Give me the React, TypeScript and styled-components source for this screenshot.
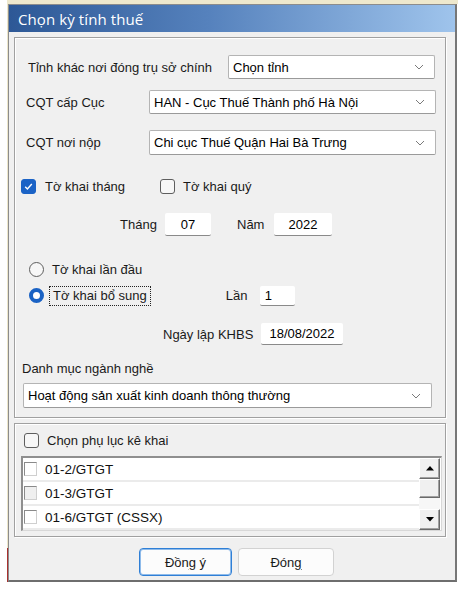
import styled, { createGlobalStyle } from "styled-components";

const GlobalStyle = createGlobalStyle`
  html, body {
    margin: 0;
    padding: 0;
    background: #fff;
  }
  body {
    font-family: "Liberation Sans", Arial, sans-serif;
    font-size: 13px;
    color: #000;
  }
`;

const Chevron = () => (
  <svg width="10" height="6" viewBox="0 0 10 6">
    <path d="M1 1 L5 5 L9 1" fill="none" stroke="#7a7a7a" strokeWidth="1" />
  </svg>
);

const Check = () => (
  <svg width="11" height="11" viewBox="0 0 11 11">
    <path d="M2.2 5.8 L4.4 8 L8.8 3" fill="none" stroke="#fff" strokeWidth="1.4" />
  </svg>
);

const Arrow = ({ down }: { down?: boolean }) => (
  <svg width="8" height="5" viewBox="0 0 8 5">
    <path d={down ? "M0 0 H8 L4 4.5 Z" : "M0 4.5 H8 L4 0 Z"} fill="#000" />
  </svg>
);

export default function App() {
  const rows = [
    { code: "01-2/GTGT", dim: false },
    { code: "01-3/GTGT", dim: true },
    { code: "01-6/GTGT (CSSX)", dim: false },
  ];

  return (
    <>
      <GlobalStyle />
      <Frame>
        <Window>
          <TitleBar>Chọn kỳ tính thuế</TitleBar>
          <Body>
            <Group $height={381}>
              <Row $top={17} $left={13}>
                <Label $width={200}>Tỉnh khác nơi đóng trụ sở chính</Label>
                <Select $width={207} $height={24}>
                  <span>Chọn tỉnh</span>
                  <Chevron />
                </Select>
              </Row>
              <Row $top={11} $left={11}>
                <Label $width={123}>CQT cấp Cục</Label>
                <Select $width={287} $height={24}>
                  <span>HAN - Cục Thuế Thành phố Hà Nội</span>
                  <Chevron />
                </Select>
              </Row>
              <Row $top={16} $left={11}>
                <Label $width={123}>CQT nơi nộp</Label>
                <Select $width={287} $height={25}>
                  <span>Chi cục Thuế Quận Hai Bà Trưng</span>
                  <Chevron />
                </Select>
              </Row>
              <Row $top={21} $left={6} $height={20}>
                <CheckBox $checked>
                  <Check />
                </CheckBox>
                <Label $width={124} $pad={9}>Tờ khai tháng</Label>
                <CheckBox />
                <Label $pad={8}>Tờ khai quý</Label>
              </Row>
              <Row $top={17} $left={105} $height={23}>
                <Label $width={45}>Tháng</Label>
                <TextBox $width={46}>07</TextBox>
                <Label $width={63} $pad={26}>Năm</Label>
                <TextBox $width={58}>2022</TextBox>
              </Row>
              <Row $top={23} $left={14} $height={20}>
                <Radio />
                <Label $pad={8}>Tờ khai lần đầu</Label>
              </Row>
              <Row $top={6} $left={14} $height={21}>
                <Radio $checked />
                <Focus>Tờ khai bổ sung</Focus>
                <Label $width={109} $pad={75}>Lần</Label>
                <TextBox $width={35} $height={20} $left>
                  1
                </TextBox>
              </Row>
              <Row $top={17} $left={148} $height={22}>
                <Label $width={98}>Ngày lập KHBS</Label>
                <TextBox $width={82} $height={22}>
                  18/08/2022
                </TextBox>
              </Row>
              <Row $top={15} $left={7} $height={16}>
                <Label>Danh mục ngành nghề</Label>
              </Row>
              <Row $top={7} $left={8}>
                <Select $width={409} $height={25}>
                  <span>Hoạt động sản xuất kinh doanh thông thường</span>
                  <Chevron />
                </Select>
              </Row>
            </Group>

            <Group $height={114} $gap={5}>
              <Row $top={8} $left={9} $height={16}>
                <CheckBox />
                <Label $pad={8}>Chọn phụ lục kê khai</Label>
              </Row>
              <ListBox>
                <ListRows>
                  {rows.map((r) => (
                    <ListRow key={r.code}>
                      <ItemBox $dim={r.dim} />
                      <span>{r.code}</span>
                    </ListRow>
                  ))}
                </ListRows>
                <ScrollBar>
                  <ScrollButton>
                    <Arrow />
                  </ScrollButton>
                  <Thumb />
                  <Track />
                  <ScrollButton>
                    <Arrow down />
                  </ScrollButton>
                </ScrollBar>
              </ListBox>
            </Group>

            <Buttons>
              <Button $primary>
                <span>
                  Đồn<u>g</u> ý
                </span>
              </Button>
              <Button>
                <span>
                  Đón<u>g</u>
                </span>
              </Button>
            </Buttons>
          </Body>
        </Window>
      </Frame>
    </>
  );
}

const Frame = styled.div`
  margin-left: 7px;
  width: 451px;
  padding: 4px 0 0 1px;
  background: linear-gradient(
    180deg,
    #ece5c9 0,
    #ece5c9 548px,
    #a8302e 548px,
    #a8302e 100%
  );
  background-size: 2px 100%;
  background-repeat: no-repeat;
  box-sizing: border-box;
  position: relative;

  &::before {
    content: "";
    position: absolute;
    left: 0;
    right: 0;
    top: 0;
    height: 4px;
    background: #eee8cd;
  }
`;

const Window = styled.div`
  width: 449px;
  height: 578px;
  box-sizing: border-box;
  border: 1px solid #8c8c8c;
  border-bottom: 2px solid #6e6e6e;
  border-right: 2px solid #777;
  background: #f0f0f0;
  display: flex;
  flex-direction: column;
`;

const TitleBar = styled.div`
  height: 27px;
  flex: none;
  display: flex;
  align-items: center;
  padding-left: 9px;
  padding-top: 1px;
  box-sizing: border-box;
  background: linear-gradient(90deg, #2d5896 0%, #5682bd 45%, #9fc4ec 100%);
  color: #fff;
  font-family: "Open Sans", "Noto Sans", sans-serif;
  font-size: 15px;
  font-weight: 500;
  letter-spacing: 0.1px;
`;

const Body = styled.div`
  flex: 1;
  display: flex;
  flex-direction: column;
  padding: 5px 9px 0 5px;
`;

const Group = styled.div<{ $height: number; $gap?: number }>`
  height: ${(p) => p.$height}px;
  margin-top: ${(p) => p.$gap ?? 0}px;
  box-sizing: border-box;
  border: 1px solid #a0a0a0;
  box-shadow: inset 1px 1px 0 #fff, 1px 1px 0 #fff;
  display: flex;
  flex-direction: column;
  flex: none;
`;

const Row = styled.div<{ $top: number; $left: number; $height?: number }>`
  display: flex;
  align-items: center;
  margin-top: ${(p) => p.$top}px;
  padding-left: ${(p) => p.$left}px;
  height: ${(p) => (p.$height ? `${p.$height}px` : "auto")};
  flex: none;
`;

const Label = styled.span<{ $width?: number; $pad?: number }>`
  flex: none;
  width: ${(p) => (p.$width ? `${p.$width}px` : "auto")};
  padding-left: ${(p) => p.$pad ?? 0}px;
  box-sizing: border-box;
  white-space: nowrap;
  color: #1a1a1a;
`;

const Select = styled.div<{ $width: number; $height: number }>`
  width: ${(p) => p.$width}px;
  height: ${(p) => p.$height}px;
  box-sizing: border-box;
  background: #fff;
  border: 1px solid #b4b4b4;
  border-bottom-color: #9a9a9a;
  border-radius: 2px;
  display: flex;
  align-items: center;
  justify-content: space-between;
  padding: 0 10px 0 4px;
  white-space: nowrap;
`;

const TextBox = styled.div<{ $width: number; $height?: number; $left?: boolean }>`
  width: ${(p) => p.$width}px;
  height: ${(p) => p.$height ?? 23}px;
  box-sizing: border-box;
  background: #fff;
  border-bottom: 1px solid #8a8a8a;
  border-radius: 2px;
  display: flex;
  align-items: center;
  justify-content: ${(p) => (p.$left ? "flex-start" : "center")};
  padding-left: ${(p) => (p.$left ? 5 : 0)}px;
  flex: none;
`;

const CheckBox = styled.span<{ $checked?: boolean }>`
  width: 15px;
  height: 15px;
  flex: none;
  box-sizing: border-box;
  border-radius: 3px;
  display: inline-flex;
  align-items: center;
  justify-content: center;
  background: ${(p) => (p.$checked ? "#1b63c6" : "#f7f7f7")};
  border: 1px solid ${(p) => (p.$checked ? "#1b63c6" : "#5e5e5e")};
`;

const Radio = styled.span<{ $checked?: boolean }>`
  width: 15px;
  height: 15px;
  flex: none;
  box-sizing: border-box;
  border-radius: 50%;
  background: ${(p) => (p.$checked ? "#fff" : "#f7f7f7")};
  border: ${(p) => (p.$checked ? "4px solid #1a62c4" : "1px solid #5e5e5e")};
`;

const Focus = styled.span`
  margin-left: 5px;
  padding: 1px 3px 2px;
  border: 1px dotted #222;
  white-space: nowrap;
  color: #1a1a1a;
`;

const ListBox = styled.div`
  margin: 8px 3px 0 6px;
  height: 75px;
  box-sizing: border-box;
  background: #fff;
  border-top: 2px solid #8f8f8f;
  border-left: 2px solid #8f8f8f;
  border-right: 1px solid #d8d8d8;
  border-bottom: 1px solid #d8d8d8;
  display: flex;
  flex: none;
`;

const ListRows = styled.div`
  flex: 1;
  display: flex;
  flex-direction: column;
`;

const ListRow = styled.div`
  height: 24px;
  box-sizing: border-box;
  border-bottom: 2px solid #ebebeb;
  display: flex;
  align-items: center;
  gap: 8px;
  padding-left: 1px;
  font-size: 13.5px;
  color: #111;
`;

const ItemBox = styled.span<{ $dim?: boolean }>`
  width: 13px;
  height: 14px;
  box-sizing: border-box;
  border: 1px solid #8a8a8a;
  border-right-color: #cfcfcf;
  border-bottom-color: #cfcfcf;
  background: ${(p) => (p.$dim ? "#efefef" : "#fff")};
`;

const ScrollBar = styled.div`
  width: 21px;
  margin-right: 1px;
  display: flex;
  flex-direction: column;
  background: #f4f4f4;
`;

const ScrollButton = styled.div`
  height: 21px;
  flex: none;
  box-sizing: border-box;
  background: #f0f0f0;
  border: 1px solid;
  border-color: #fff #6a6a6a #6a6a6a #fff;
  box-shadow: inset -1px -1px 0 #a0a0a0;
  display: flex;
  align-items: center;
  justify-content: center;
`;

const Thumb = styled(ScrollButton)`
  height: 19px;
`;

const Track = styled.div`
  flex: 1;
  background: #f7f7f7;
`;

const Buttons = styled.div`
  display: flex;
  gap: 6px;
  margin-top: 11px;
  padding-left: 125px;
`;

const Button = styled.div<{ $primary?: boolean }>`
  width: ${(p) => (p.$primary ? 93 : 96)}px;
  height: 28px;
  box-sizing: border-box;
  border-radius: 4px;
  background: #fcfcfc;
  border: 1px solid ${(p) => (p.$primary ? "#2f7fd6" : "#d2d2d2")};
  box-shadow: ${(p) => (p.$primary ? "inset 0 0 0 1px #8fbbea" : "none")};
  display: flex;
  align-items: center;
  justify-content: center;
  color: #1a1a1a;

  u {
    text-underline-offset: 2px;
  }
`;
